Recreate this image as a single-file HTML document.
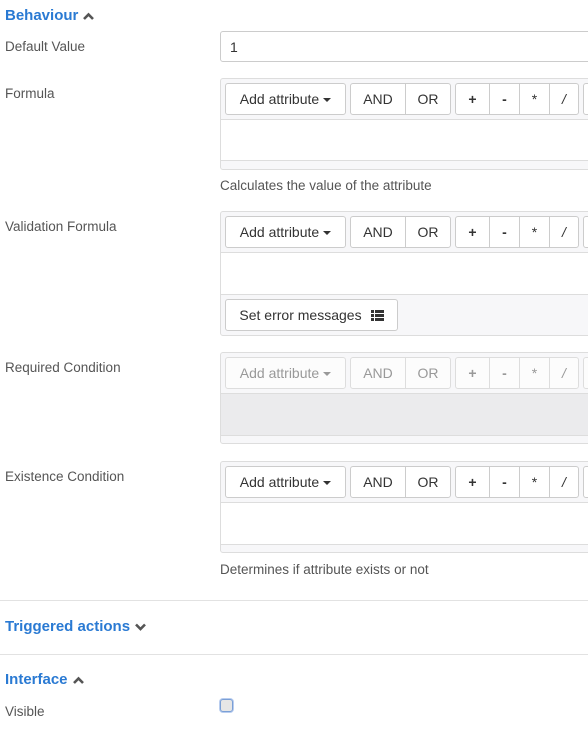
<!DOCTYPE html>
<html><head><meta charset="utf-8"><style>
*{box-sizing:border-box;margin:0;padding:0}
body{width:588px;height:732px;overflow:hidden;background:#fff;font-family:"Liberation Sans",sans-serif;font-size:13.5px;color:#555;position:relative}
.a{position:absolute}
.h{color:#2a7ad3;font-size:15px;font-weight:bold;white-space:nowrap}
.h svg{vertical-align:middle;margin-left:4px}
.lbl{left:5px;white-space:nowrap}
.box{left:220px;width:420px;border:1px solid #ddd;border-radius:3px;background:#f7f7f9;overflow:hidden}
.tb{position:absolute;left:0;right:0;top:0;height:41px;border-bottom:1px solid #ddd}
.ed{position:absolute;left:0;right:0;background:#fff;border-bottom:1px solid #ddd}
.b{position:absolute;top:4px;height:32px;background:#fff;border:1px solid #ccc;color:#333;font-size:14px;display:flex;align-items:center;justify-content:center;white-space:nowrap}
.dis .b{color:#999;border-color:#ddd;background:#fcfcfc}
.car{display:inline-block;border-left:4px solid transparent;border-right:4px solid transparent;border-top:4px solid #333;margin-left:4px;margin-top:2px}
.dis .car{border-top-color:#999}
.help{left:220px;white-space:nowrap}
.hr{left:0;width:588px;height:1px;background:#e2e2e2}
</style></head><body>
<div class="a h" style="left:5px;top:7px">Behaviour<svg width="13" height="10" viewBox="0 0 13 10"><path d="M2 8L6.5 3.5L11 8" stroke="#555" stroke-width="2.6" fill="none"/></svg></div>
<div class="a lbl" style="top:39px">Default Value</div>
<div class="a" style="left:220px;top:31px;width:420px;height:31px;border:1px solid #ccc;border-radius:3px;color:#333;font-size:14px;padding:7px 0 0 9px">1</div>

<div class="a lbl" style="top:86px">Formula</div>
<div class="a box" style="top:78px;height:92px">
 <div class="tb"></div><div class="ed" style="top:41px;height:41px"></div>
 <div class="b" style="left:4px;width:121px;border-radius:3px">Add attribute<span class="car"></span></div>
 <div class="b" style="left:129px;width:56px;border-radius:3px 0 0 3px">AND</div>
 <div class="b" style="left:184px;width:46px;border-radius:0 3px 3px 0">OR</div>
 <div class="b" style="left:234px;width:35px;border-radius:3px 0 0 3px;font-weight:bold">+</div>
 <div class="b" style="left:268px;width:31px;font-weight:bold">-</div>
 <div class="b" style="left:298px;width:31px">*</div>
 <div class="b" style="left:328px;width:30px;border-radius:0 3px 3px 0;font-style:italic">/</div>
 <div class="b" style="left:362px;width:40px;border-radius:3px"></div>
</div>
<div class="a help" style="top:178px">Calculates the value of the attribute</div>

<div class="a lbl" style="top:219px">Validation Formula</div>
<div class="a box" style="top:211px;height:125px">
 <div class="tb"></div><div class="ed" style="top:41px;height:42px"></div>
 <div class="b" style="left:4px;width:121px;border-radius:3px">Add attribute<span class="car"></span></div>
 <div class="b" style="left:129px;width:56px;border-radius:3px 0 0 3px">AND</div>
 <div class="b" style="left:184px;width:46px;border-radius:0 3px 3px 0">OR</div>
 <div class="b" style="left:234px;width:35px;border-radius:3px 0 0 3px;font-weight:bold">+</div>
 <div class="b" style="left:268px;width:31px;font-weight:bold">-</div>
 <div class="b" style="left:298px;width:31px">*</div>
 <div class="b" style="left:328px;width:30px;border-radius:0 3px 3px 0;font-style:italic">/</div>
 <div class="b" style="left:362px;width:40px;border-radius:3px"></div>
 <div class="b" style="left:4px;top:87px;width:173px;border-radius:3px">Set error messages<svg style="margin-left:9px" width="13" height="11" viewBox="0 0 13 11"><rect x="0" y="0" width="3" height="3" fill="#333"/><rect x="4" y="0" width="9" height="3" fill="#333"/><rect x="0" y="4" width="3" height="3" fill="#333"/><rect x="4" y="4" width="9" height="3" fill="#333"/><rect x="0" y="8" width="3" height="3" fill="#333"/><rect x="4" y="8" width="9" height="3" fill="#333"/></svg></div>
</div>

<div class="a lbl" style="top:360px">Required Condition</div>
<div class="a box dis" style="top:352px;height:92px">
 <div class="tb"></div><div class="ed" style="top:41px;height:42px;background:#ebebed"></div>
 <div class="b" style="left:4px;width:121px;border-radius:3px">Add attribute<span class="car"></span></div>
 <div class="b" style="left:129px;width:56px;border-radius:3px 0 0 3px">AND</div>
 <div class="b" style="left:184px;width:46px;border-radius:0 3px 3px 0">OR</div>
 <div class="b" style="left:234px;width:35px;border-radius:3px 0 0 3px;font-weight:bold">+</div>
 <div class="b" style="left:268px;width:31px;font-weight:bold">-</div>
 <div class="b" style="left:298px;width:31px">*</div>
 <div class="b" style="left:328px;width:30px;border-radius:0 3px 3px 0;font-style:italic">/</div>
 <div class="b" style="left:362px;width:40px;border-radius:3px"></div>
</div>

<div class="a lbl" style="top:469px">Existence Condition</div>
<div class="a box" style="top:461px;height:92px">
 <div class="tb"></div><div class="ed" style="top:41px;height:42px"></div>
 <div class="b" style="left:4px;width:121px;border-radius:3px">Add attribute<span class="car"></span></div>
 <div class="b" style="left:129px;width:56px;border-radius:3px 0 0 3px">AND</div>
 <div class="b" style="left:184px;width:46px;border-radius:0 3px 3px 0">OR</div>
 <div class="b" style="left:234px;width:35px;border-radius:3px 0 0 3px;font-weight:bold">+</div>
 <div class="b" style="left:268px;width:31px;font-weight:bold">-</div>
 <div class="b" style="left:298px;width:31px">*</div>
 <div class="b" style="left:328px;width:30px;border-radius:0 3px 3px 0;font-style:italic">/</div>
 <div class="b" style="left:362px;width:40px;border-radius:3px"></div>
</div>
<div class="a help" style="top:562px">Determines if attribute exists or not</div>

<div class="a hr" style="top:600px"></div>
<div class="a h" style="left:5px;top:618px">Triggered actions<svg width="13" height="10" viewBox="0 0 13 10"><path d="M2 2.5L6.5 7L11 2.5" stroke="#555" stroke-width="2.6" fill="none"/></svg></div>
<div class="a hr" style="top:654px"></div>
<div class="a h" style="left:5px;top:671px">Interface<svg width="13" height="10" viewBox="0 0 13 10"><path d="M2 8L6.5 3.5L11 8" stroke="#555" stroke-width="2.6" fill="none"/></svg></div>
<div class="a lbl" style="top:704px">Visible</div>
<div class="a" style="left:220px;top:699px;width:13px;height:13px;border:1px solid #7a9fd6;border-radius:3px;background:#e6e6e6;box-shadow:0 0 0 1px #b9cdef"></div>
</body></html>
